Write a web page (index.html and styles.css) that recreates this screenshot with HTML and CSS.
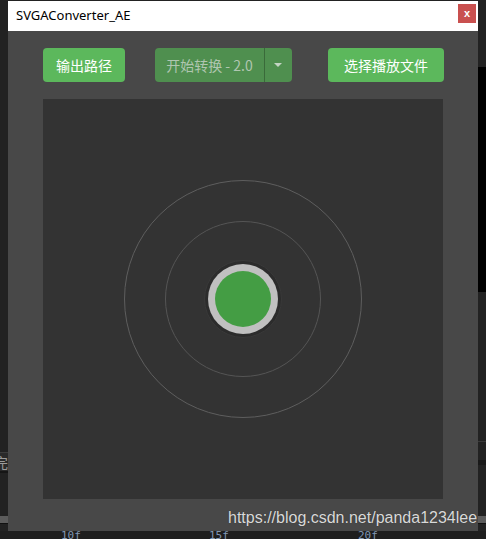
FILE: index.html
```html
<!DOCTYPE html>
<html>
<head>
<meta charset="utf-8">
<link rel="stylesheet" href="styles.css">
</head>
<body>
<div class="desk">
  <div class="bg-left-line"></div>
  <div class="bg-left-glyph">完</div>
  <div class="bg-bar bg-bar-left"></div>
  <div class="bg-right-black"></div>
  <div class="bg-right-line"></div>
  <div class="bg-bar bg-bar-right"></div>
  <div class="ruler">
    <span class="tick t1">10f</span>
    <span class="tick t2">15f</span>
    <span class="tick t3">20f</span>
  </div>

  <div class="window">
    <div class="titlebar">
      <span class="title">SVGAConverter_AE</span>
      <button class="close">x</button>
    </div>
    <div class="content">
      <div class="toolbar">
        <button class="btn btn-path">输出路径</button>
        <div class="split">
          <button class="btn split-main">开始转换 - 2.0</button>
          <button class="btn split-caret"><span class="caret"></span></button>
        </div>
        <button class="btn btn-file">选择播放文件</button>
      </div>
      <div class="stage">
        <svg class="rings" width="400" height="400" viewBox="0 0 400 400">
          <circle cx="200" cy="200" r="118.5" fill="none" stroke="#5e5e5e" stroke-width="1"/>
          <circle cx="200" cy="200" r="77.5" fill="none" stroke="#555555" stroke-width="1"/>
          <circle cx="200" cy="200" r="38.5" fill="#2c2c2c" stroke="#393939" stroke-width="1"/>
          <circle cx="200" cy="200" r="35" fill="#c0c0c0"/>
          <circle cx="200" cy="200" r="28" fill="#449d44"/>
        </svg>
      </div>
    </div>
  </div>

  <div class="watermark">https://blog.csdn.net/panda1234lee</div>
</div>
</body>
</html>
```

FILE: styles.css
```css
* { box-sizing: border-box; }
html, body {
  margin: 0;
  padding: 0;
  background: #1f1f1f;
  width: 486px;
  height: 539px;
  overflow: hidden;
}
.desk {
  position: relative;
  width: 486px;
  height: 539px;
  padding: 1px 8px 0 8px;
  background: #222222;
}

/* background application bits */
.bg-left-line {
  position: absolute;
  left: 0; top: 452px;
  width: 8px; height: 21px;
  background: #2a2a2a;
  border-top: 1px solid #3c3c3c;
  border-bottom: 2px solid #161616;
}
.bg-left-glyph {
  position: absolute;
  left: -6px; top: 454px;
  font: 14px "Noto Sans CJK SC", sans-serif;
  color: #9a9a9a;
  line-height: 16px;
}
.bg-bar {
  position: absolute;
  height: 8px;
  background: #5c5c5c;
  border-bottom: 1px solid #111;
}
.bg-bar-left { left: 0; top: 516px; width: 8px; }
.bg-bar-right { left: 478px; top: 516px; width: 8px; }
.bg-right-black {
  position: absolute;
  left: 478px; top: 67px;
  width: 8px; height: 225px;
  background: #000;
}
.bg-right-line {
  position: absolute;
  left: 478px; top: 441px;
  width: 8px; height: 24px;
  border-top: 1px solid #3a3a3a;
  border-bottom: 5px solid #191919;
}
.ruler {
  position: absolute;
  left: 0; top: 531px;
  width: 486px; height: 8px;
  background: #1e1e1e;
  overflow: hidden;
}
.tick {
  position: absolute;
  top: -1px;
  font: 11px "DejaVu Sans Mono", monospace;
  color: #8096b4;
  line-height: 12px;
}
.t1 { left: 61px; }
.t2 { left: 209px; }
.t3 { left: 358px; }

/* window */
.window {
  position: relative;
  width: 470px;
  height: 530px;
  background: #484848;
  display: flex;
  flex-direction: column;
}
.titlebar {
  height: 30px;
  background: #ffffff;
  display: flex;
  align-items: center;
  justify-content: space-between;
  padding: 0 2px 0 8px;
}
.title {
  font: 13px "Noto Sans", "Liberation Sans", sans-serif;
  color: #000;
  margin-top: -2px;
}
.close {
  width: 18px;
  height: 19px;
  margin-top: -5px;
  border: none;
  padding: 0;
  background: #c9504f;
  color: #fff;
  font: bold 11px "Liberation Sans", sans-serif;
  line-height: 17px;
}
.content {
  padding: 17px 35px 0 35px;
  display: flex;
  flex-direction: column;
  gap: 17px;
}
.toolbar {
  display: flex;
  height: 34px;
  width: 401px;
}
.btn {
  border: none;
  margin: 0;
  height: 34px;
  border-radius: 4px;
  background: #5cb85c;
  color: #ffffff;
  font: 14px "Noto Sans CJK SC", "Liberation Sans", sans-serif;
  padding: 0;
}
.btn-path { width: 82px; }
.btn-file { width: 116px; margin-left: auto; }
.split {
  display: flex;
  width: 137px;
  height: 34px;
  margin-left: 30px;
}
.split-main {
  width: 110px;
  border-radius: 4px 0 0 4px;
  background: #4f8f4f;
  color: #b0c6b0;
  border-right: 1px solid #3a6a3a;
  font-family: "Noto Sans CJK SC", "Liberation Sans", sans-serif;
}
.split-caret {
  width: 27px;
  border-radius: 0 4px 4px 0;
  background: #4f8f4f;
  display: flex;
  align-items: center;
  justify-content: center;
}
.caret {
  width: 0; height: 0;
  border-left: 4px solid transparent;
  border-right: 4px solid transparent;
  border-top: 4px solid #c4d4c4;
  margin-left: -1px;
}
.stage {
  width: 400px;
  height: 400px;
  background: #333333;
}
.rings { display: block; }

.watermark {
  position: absolute;
  left: 228px;
  top: 509px;
  font: 16px "Liberation Sans", Arial, sans-serif;
  line-height: 18px;
  color: #d9d9d9;
  text-shadow: 0 0 1px rgba(0,0,0,0.4);
  white-space: nowrap;
}
```
